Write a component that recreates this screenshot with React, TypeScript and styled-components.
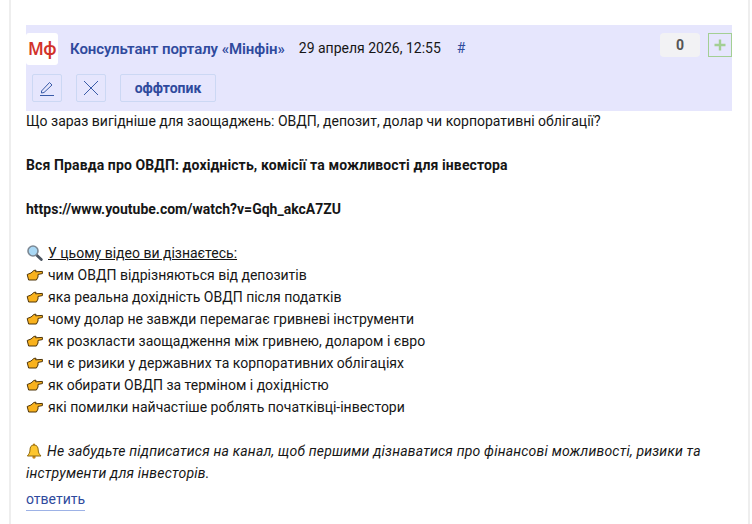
import React from 'react';
import styled, { createGlobalStyle } from 'styled-components';

const GlobalStyle = createGlobalStyle`
  html, body {
    margin: 0;
    padding: 0;
    background: #fff;
    overflow: hidden;
  }
`;

const Page = styled.div`
  width: 752px;
  height: 524px;
  box-sizing: border-box;
  padding: 25px 20px 0 26px;
  font-family: Roboto, "Noto Sans", sans-serif;
  font-size: 14px;
  line-height: 22px;
  color: #161616;
  background: #fff;
  position: relative;
  overflow: hidden;

  &::before,
  &::after {
    content: '';
    position: absolute;
    top: 0;
    bottom: 0;
    width: 2px;
    background: #eeeeee;
  }
  &::before {
    left: 9px;
  }
  &::after {
    right: 2px;
  }
`;

const Head = styled.div`
  background: #e6e6fd;
  height: 86px;
  box-sizing: border-box;
  padding-top: 8px;
  display: flex;
  flex-direction: column;
  gap: 9px;
`;

const TopRow = styled.div`
  display: flex;
  align-items: center;
  height: 32px;
`;

const Logo = styled.div`
  width: 32px;
  height: 32px;
  background: #fff;
  border-radius: 3px;
  display: flex;
  align-items: center;
  justify-content: center;
  flex: none;
  color: #d2322b;
  font-family: "Noto Sans", sans-serif;
  font-size: 17px;
  font-weight: 600;
  letter-spacing: -0.6px;
`;

const Author = styled.span`
  margin-left: 12px;
  font-size: 15px;
  font-weight: 600;
  letter-spacing: -0.07px;
  color: #2f4a9d;
  white-space: nowrap;
`;

const DateText = styled.span`
  margin-left: 14px;
  margin-bottom: 2px;
  white-space: nowrap;
`;

const Hash = styled.span`
  margin-left: 16px;
  margin-bottom: 2px;
  color: #2f4a9d;
`;

const Votes = styled.div`
  margin-left: auto;
  display: flex;
  gap: 8px;
  align-items: center;
  align-self: flex-start;
`;

const Count = styled.div`
  width: 40px;
  height: 24px;
  border-radius: 4px;
  background: #f2f2f4;
  color: #555;
  font-weight: 700;
  text-align: center;
  line-height: 24px;
`;

const Plus = styled.div`
  width: 24px;
  height: 24px;
  box-sizing: border-box;
  border: 1px solid #a3cf94;
  display: flex;
  align-items: center;
  justify-content: center;
`;

const Actions = styled.div`
  display: flex;
  gap: 14px;
  padding-left: 6px;
`;

const ActionButton = styled.div<{ $wide?: boolean }>`
  height: 28px;
  width: ${(p) => (p.$wide ? 96 : 30)}px;
  box-sizing: border-box;
  border: 1px solid #ccd8f4;
  border-radius: 2px;
  display: flex;
  align-items: center;
  justify-content: center;
  color: #2f4a9d;
  font-weight: 700;
`;

const Body = styled.div`
  margin-top: -1px;
`;

const Line = styled.div`
  height: 22px;
  white-space: nowrap;
  display: flex;
  align-items: center;
  gap: 5px;
`;

const Gap = styled.div`
  height: 22px;
`;

const Bold = styled.b`
  font-weight: 700;
  letter-spacing: 0.12px;
`;

const Link = styled.b`
  font-weight: 700;
`;

const Underlined = styled.span`
  text-decoration: underline;
`;

const Italic = styled.i`
  font-style: italic;
  letter-spacing: 0.2px;
`;

const Reply = styled.span`
  display: inline-block;
  margin-top: 5px;
  color: #2f4a9d;
  border-bottom: 1px solid #9db2e6;
  padding-bottom: 1px;
  line-height: 20px;
`;

const Hand = () => (
  <svg width="17" height="12" viewBox="0 0 17 12">
    <path
      d="M1.2 5.5 L5 4 L8 1.4 L10 1.2 L9.6 2.8 L16.4 2.4 L16.4 4.6 L12 5.4 L12 8 L10.4 11 L2.6 11 Z"
      fill="#f9b21d"
      stroke="#4f3508"
      strokeWidth="1"
      strokeLinejoin="round"
    />
  </svg>
);

const Magnifier = () => (
  <svg width="17" height="16" viewBox="0 0 17 16">
    <path d="M10 9.5 L15.3 14.5" stroke="#4c5662" strokeWidth="2.8" strokeLinecap="round" />
    <circle cx="7" cy="6" r="5" fill="#a9d8f5" stroke="#7c8894" strokeWidth="1.6" />
  </svg>
);

const Bell = () => (
  <svg width="16" height="16" viewBox="0 0 16 16">
    <circle cx="8" cy="14" r="1.7" fill="#c9881a" />
    <circle cx="8" cy="1.6" r="1.1" fill="#c9881a" />
    <path
      d="M8 2 C11 2 12.2 4.2 12.2 7 C12.2 10 13.6 11.4 15 13 L1.4 13 C2.6 11.4 4 10 4 7 C4 4.2 5 2 8 2 Z"
      fill="#fdc62f"
      stroke="#8f6a12"
      strokeWidth="1"
      strokeLinejoin="round"
    />
  </svg>
);

const items = [
  'чим ОВДП відрізняються від депозитів',
  'яка реальна дохідність ОВДП після податків',
  'чому долар не завжди перемагає гривневі інструменти',
  'як розкласти заощадження між гривнею, доларом і євро',
  'чи є ризики у державних та корпоративних облігаціях',
  'як обирати ОВДП за терміном і дохідністю',
  'які помилки найчастіше роблять початківці-інвестори',
];

export default function App() {
  return (
    <Page>
      <GlobalStyle />
      <Head>
        <TopRow>
          <Logo>Мф</Logo>
          <Author>Консультант порталу «Мінфін»</Author>
          <DateText>29 апреля 2026, 12:55</DateText>
          <Hash>#</Hash>
          <Votes>
            <Count>0</Count>
            <Plus>
              <svg width="14" height="14" viewBox="0 0 14 14">
                <path d="M7 1.5 V12.5 M1.5 7 H12.5" stroke="#a3cf94" strokeWidth="2.4" />
              </svg>
            </Plus>
          </Votes>
        </TopRow>
        <Actions>
          <ActionButton>
            <svg width="16" height="16" viewBox="0 0 16 16" fill="none" stroke="#3a5ba8">
              <path d="M2.5 11 L10.5 2.5 L13 5 L5 12.5 L2.5 13 Z" />
              <path d="M1 15.5 H15" />
            </svg>
          </ActionButton>
          <ActionButton>
            <svg width="16" height="16" viewBox="0 0 16 16" stroke="#3a5ba8">
              <path d="M1 1 L15 15 M15 1 L1 15" />
            </svg>
          </ActionButton>
          <ActionButton $wide>оффтопик</ActionButton>
        </Actions>
      </Head>
      <Body>
        <Line>Що зараз вигідніше для заощаджень: ОВДП, депозит, долар чи корпоративні облігації?</Line>
        <Gap />
        <Line><Bold>Вся Правда про ОВДП: дохідність, комісії та можливості для інвестора</Bold></Line>
        <Gap />
        <Line><Link>https://www.youtube.com/watch?v=Gqh_akcA7ZU</Link></Line>
        <Gap />
        <Line><Magnifier /><Underlined>У цьому відео ви дізнаєтесь:</Underlined></Line>
        {items.map((item) => (
          <Line key={item}><Hand />{item}</Line>
        ))}
        <Gap />
        <Line><Bell /><Italic>Не забудьте підписатися на канал, щоб першими дізнаватися про фінансові можливості, ризики та</Italic></Line>
        <Line><Italic>інструменти для інвесторів.</Italic></Line>
        <Reply>ответить</Reply>
      </Body>
    </Page>
  );
}
